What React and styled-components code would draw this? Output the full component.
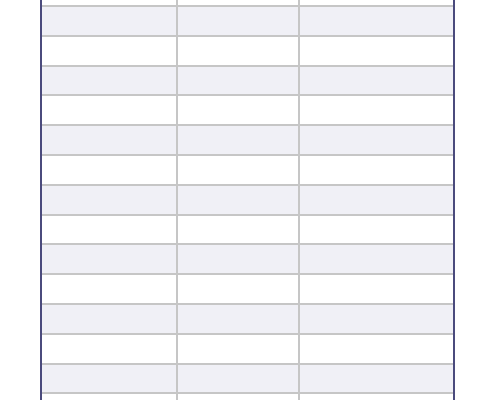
import React from 'react';
import styled, { createGlobalStyle } from 'styled-components';

const GlobalStyle = createGlobalStyle`
  html, body {
    margin: 0;
    padding: 0;
    background: #ffffff;
    overflow: hidden;
    font-family: "Liberation Sans", Arial, sans-serif;
  }
`;

const Page = styled.div`
  height: 400px;
  overflow: hidden;
  padding: 0 40px;
`;

const Table = styled.table`
  width: 415px;
  margin-top: -22.8px;
  border-collapse: separate;
  border-spacing: 0;
  table-layout: fixed;
  border-left: 2px solid #4b4b7d;
  border-right: 2px solid #4b4b7d;
`;

const Row = styled.tr`
  background: ${(p) => (p.$shaded ? '#f0f0f6' : '#ffffff')};
`;

const Cell = styled.td`
  height: 27.8px;
  padding: 0;
  border-bottom: 2px solid #c6c6c6;
  border-right: ${(p) => (p.$last ? 'none' : '2px solid #c6c6c6')};
  font-size: 13px;
  color: #333;
`;

const rows = Array.from({ length: 15 }, (_, i) => i);

const App = () => (
  <>
    <GlobalStyle />
    <Page>
      <Table>
        <colgroup>
          <col style={{ width: 136 }} />
          <col style={{ width: 122 }} />
          <col />
        </colgroup>
        <tbody>
          {rows.map((i) => (
            <Row key={i} $shaded={i % 2 === 1}>
              <Cell />
              <Cell />
              <Cell $last />
            </Row>
          ))}
        </tbody>
      </Table>
    </Page>
  </>
);

export default App;
